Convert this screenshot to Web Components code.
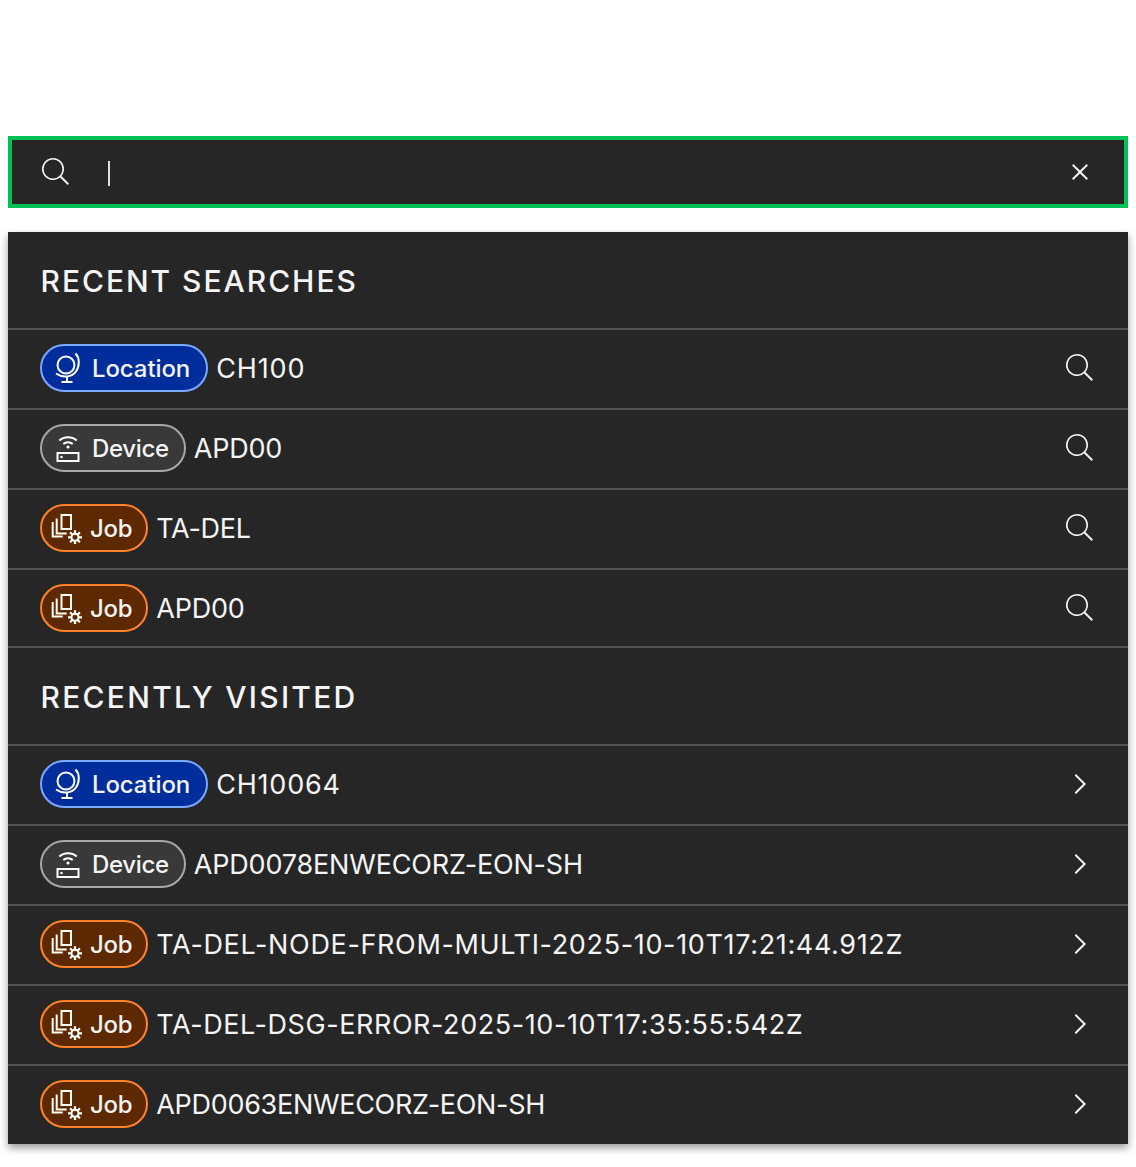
<!DOCTYPE html>
<html lang="en">
<head>
<meta charset="utf-8">
<title>Search</title>
<style>
  html, body { margin: 0; background: #fff; }
  body {
    box-sizing: border-box;
    min-height: 1167px;
    padding: 136px 8px 23px;
    font-family: "Inter", "Noto Sans", sans-serif;
    color: #f4f4f4;
  }
</style>
</head>
<body>
<search-box></search-box>
<search-panel>
  <panel-heading track="1.96">RECENT SEARCHES</panel-heading>
  <result-row kind="location" action="search" track=".9">CH100</result-row>
  <result-row kind="device" action="search" track="-.2">APD00</result-row>
  <result-row kind="job" action="search" track="-.3">TA-DEL</result-row>
  <result-row kind="job" action="search" track="-.2" last>APD00</result-row>
  <panel-heading track="2.28">RECENTLY VISITED</panel-heading>
  <result-row kind="location" action="open" track=".8">CH10064</result-row>
  <result-row kind="device" action="open" track="-.18">APD0078ENWECORZ-EON-SH</result-row>
  <result-row kind="job" action="open" track=".65">TA-DEL-NODE-FROM-MULTI-2025-10-10T17:21:44.912Z</result-row>
  <result-row kind="job" action="open" track=".57">TA-DEL-DSG-ERROR-2025-10-10T17:35:55:542Z</result-row>
  <result-row kind="job" action="open" track="-.3" end>APD0063ENWECORZ-EON-SH</result-row>
</search-panel>

<script>
const ICONS = {
  search: `<svg width="32" height="32" viewBox="0 0 32 32" fill="#f4f4f4"><path d="M29 27.59l-7.55-7.55a11.02 11.02 0 1 0-1.41 1.41L27.59 29zM3.6 13a9.4 9.4 0 1 1 9.4 9.4A9.41 9.41 0 0 1 3.6 13z"/></svg>`,
  close: `<svg width="32" height="32" viewBox="0 0 32 32" fill="#f4f4f4"><path d="M24 9.4L22.6 8 16 14.6 9.4 8 8 9.4 14.6 16 8 22.6 9.4 24 16 17.4 22.6 24 24 22.6 17.4 16 24 9.4z"/></svg>`,
  chevron: `<svg width="32" height="32" viewBox="0 0 32 32" fill="#f4f4f4"><path d="M22 16L12 26 10.6 24.6 19.2 16 10.6 7.4 12 6z"/></svg>`,
  location: `<svg width="32" height="32" viewBox="0 0 32 32" fill="none" stroke="#fff" stroke-width="2"><circle cx="15" cy="13" r="8.500"/><path d="M24.500 1.500c4 4 4.500 12 .5 18-4 5.500-13 7-20 2M16 25v4.500M10.500 30h11"/></svg>`,
  device: `<svg width="32" height="32" viewBox="0 0 32 32" fill="none" stroke="#fff" stroke-width="2"><path d="M8.300 8.500c4.500-4.500 13-4.500 17.400 0M12.300 12c2.500-2.400 7-2.400 9.400 0"/><circle cx="17" cy="15" r="1.600" fill="#fff" stroke="none"/><rect x="6.500" y="21" width="21" height="8"/><circle cx="10.500" cy="25" r="1.300" fill="#fff" stroke="none"/></svg>`,
  job: `<svg width="32" height="32" viewBox="0 0 32 32" fill="none" stroke="#fff" stroke-width="2"><rect x="10.500" y="3" width="9.500" height="14"/><path d="M5.700 6.500v15h10M1.700 10v14.500h10"/><g transform="translate(24 25.300)"><circle r="3.500"/><path stroke-width="2.200" d="M0-7v3M0 4v3M-7 0h3M4 0h3M-4.900-4.900l2.100 2.100M2.800 2.800l2.100 2.100M-4.900 4.900l2.100-2.100M2.800-2.800l2.100-2.100"/></g></svg>`
};

const KINDS = {
  location: { label: "Location", bg: "#002d9c", line: "#78a9ff", gap: 9, track: -.1, pad: 16 },
  device: { label: "Device", bg: "#393939", line: "#a8a8a8", gap: 9, track: -.33, pad: 15 },
  job: { label: "Job", bg: "#5e2900", line: "#ff832b", gap: 7, track: -.3, pad: 14 }
};

class SearchBox extends HTMLElement {
  constructor() {
    super();
    const root = this.attachShadow({ mode: "open" });
    root.innerHTML = `
      <style>
        :host {
          display: flex;
          align-items: center;
          box-sizing: border-box;
          height: 72px;
          padding: 0 28px;
          background: #262626;
          border: 4px solid #00bf54;
        }
        .caret { width: 2px; height: 25px; background: #e0e0e0; margin: 3px 0 0 36px; }
        .grow { flex: 1; }
        svg { display: block; }
      </style>
      ${ICONS.search}<span class="caret"></span><span class="grow"></span>${ICONS.close}
    `;
  }
}

class SearchPanel extends HTMLElement {
  constructor() {
    super();
    const root = this.attachShadow({ mode: "open" });
    root.innerHTML = `
      <style>
        :host {
          display: block;
          margin-top: 24px;
          background: #262626;
          box-shadow: 0 4px 8px rgba(0, 0, 0, .4);
        }
      </style>
      <slot></slot>
    `;
  }
}

class PanelHeading extends HTMLElement {
  constructor() {
    super();
    const root = this.attachShadow({ mode: "open" });
    root.innerHTML = `
      <style>
        :host {
          display: flex;
          align-items: center;
          box-sizing: border-box;
          height: 98px;
          padding: 2px 32.500px 0;
          border-bottom: 2px solid #525252;
          font-size: 30px;
          font-weight: 500;
          letter-spacing: ${this.getAttribute("track")}px;
          color: #f4f4f4;
        }
      </style>
      <slot></slot>
    `;
  }
}

class KindTag extends HTMLElement {
  constructor() {
    super();
    const kind = KINDS[this.getAttribute("kind")];
    const root = this.attachShadow({ mode: "open" });
    root.innerHTML = `
      <style>
        :host {
          display: inline-flex;
          align-items: center;
          box-sizing: border-box;
          height: 48px;
          padding: 0 ${kind.pad}px 0 9px;
          gap: ${kind.gap}px;
          border-radius: 24px;
          border: 2px solid ${kind.line};
          background: ${kind.bg};
          font-size: 24px;
          font-weight: 500;
          letter-spacing: ${kind.track}px;
          color: #f4f4f4;
        }
        svg { display: block; }
      </style>
      ${ICONS[this.getAttribute("kind")]}<span>${kind.label}</span>
    `;
  }
}

class ResultRow extends HTMLElement {
  constructor() {
    super();
    const root = this.attachShadow({ mode: "open" });
    const kind = this.getAttribute("kind");
    const icon = this.getAttribute("action") === "search" ? ICONS.search : ICONS.chevron;
    const track = this.getAttribute("track") || "0";
    root.innerHTML = `
      <style>
        :host {
          display: flex;
          align-items: center;
          box-sizing: border-box;
          height: 80px;
          padding: 0 32px 2px;
          border-bottom: 2px solid #525252;
          font-size: 27px;
          color: #f4f4f4;
        }
        :host([last]) { height: 78px; padding-bottom: 0; }
        :host([end]) { height: 78px; border-bottom: 0; }
        kind-tag { margin-right: 8px; }
        .text { flex: 1; letter-spacing: ${track}px; }
        svg { display: block; }
      </style>
      <kind-tag kind="${kind}"></kind-tag>
      <span class="text"><slot></slot></span>
      ${icon}
    `;
  }
}

customElements.define("kind-tag", KindTag);
customElements.define("search-box", SearchBox);
customElements.define("search-panel", SearchPanel);
customElements.define("panel-heading", PanelHeading);
customElements.define("result-row", ResultRow);
</script>
</body>
</html>
